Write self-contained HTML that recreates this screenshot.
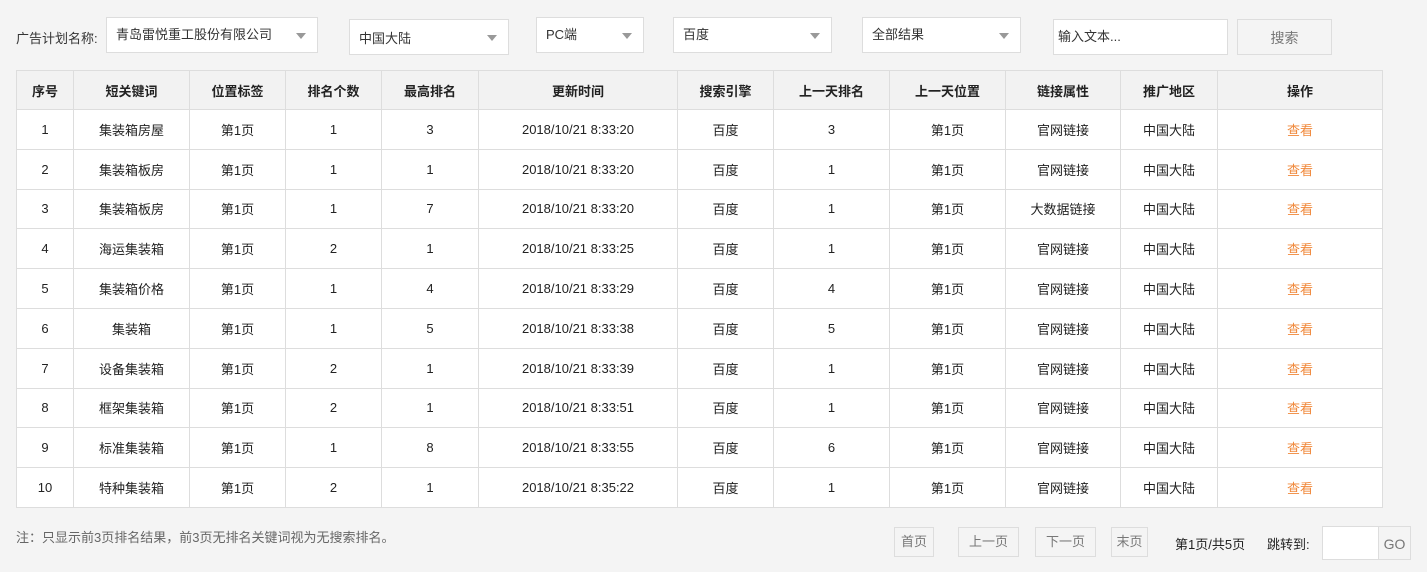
<!DOCTYPE html>
<html><head><meta charset="utf-8"><style>
*{box-sizing:border-box;margin:0;padding:0}
body{width:1427px;height:572px;background:#f4f4f4;font-family:"Liberation Sans","Noto Sans CJK SC",sans-serif;font-size:13px;color:#333;position:relative;overflow:hidden}
.a{position:absolute}
.sel{position:absolute;background:#fff;border:1px solid #ddd;height:36px;line-height:34px;padding-left:9px;color:#333}
.sel:after{content:"";position:absolute;right:11px;top:15px;border-left:5px solid transparent;border-right:5px solid transparent;border-top:6px solid #999}
table{position:absolute;left:16px;top:70px;border-collapse:collapse;background:#fff;table-layout:fixed;width:1366px}
td,th{border:1px solid #ddd;text-align:center;height:39.8px;font-size:13px;color:#222}
th{background:#f2f2f2;height:39px;font-weight:bold}
td.o{color:#f0883a}
.pb{position:absolute;top:527px;height:30px;line-height:28px;border:1px solid #ddd;text-align:center;color:#777;background:#f4f4f4}
</style></head><body>
<div class="a" style="left:16px;top:28px">广告计划名称:</div>
<div class="sel" style="left:106px;top:17px;width:212px">青岛雷悦重工股份有限公司</div>
<div class="sel" style="left:349px;top:19px;width:160px;line-height:38px">中国大陆</div>
<div class="sel" style="left:536px;top:17px;width:108px">PC端</div>
<div class="sel" style="left:673px;top:17px;width:159px">百度</div>
<div class="sel" style="left:862px;top:17px;width:159px">全部结果</div>
<div class="a" style="left:1053px;top:19px;width:175px;height:36px;background:#fff;border:1px solid #ddd;line-height:34px;padding-left:4px">输入文本...</div>
<div class="a" style="left:1237px;top:19px;width:95px;height:36px;border:1px solid #ddd;line-height:36px;text-align:center;color:#777;font-size:14px">搜索</div>
<table>
<colgroup><col style="width:57px"><col style="width:116px"><col style="width:96px"><col style="width:96px"><col style="width:97px"><col style="width:199px"><col style="width:96px"><col style="width:116px"><col style="width:116px"><col style="width:115px"><col style="width:97px"><col style="width:165px"></colgroup>
<tr><th>序号</th><th>短关键词</th><th>位置标签</th><th>排名个数</th><th>最高排名</th><th>更新时间</th><th>搜索引擎</th><th>上一天排名</th><th>上一天位置</th><th>链接属性</th><th>推广地区</th><th>操作</th></tr>
<tr><td>1</td><td>集装箱房屋</td><td>第1页</td><td>1</td><td>3</td><td>2018/10/21 8:33:20</td><td>百度</td><td>3</td><td>第1页</td><td>官网链接</td><td>中国大陆</td><td class="o">查看</td></tr>
<tr><td>2</td><td>集装箱板房</td><td>第1页</td><td>1</td><td>1</td><td>2018/10/21 8:33:20</td><td>百度</td><td>1</td><td>第1页</td><td>官网链接</td><td>中国大陆</td><td class="o">查看</td></tr>
<tr><td>3</td><td>集装箱板房</td><td>第1页</td><td>1</td><td>7</td><td>2018/10/21 8:33:20</td><td>百度</td><td>1</td><td>第1页</td><td>大数据链接</td><td>中国大陆</td><td class="o">查看</td></tr>
<tr><td>4</td><td>海运集装箱</td><td>第1页</td><td>2</td><td>1</td><td>2018/10/21 8:33:25</td><td>百度</td><td>1</td><td>第1页</td><td>官网链接</td><td>中国大陆</td><td class="o">查看</td></tr>
<tr><td>5</td><td>集装箱价格</td><td>第1页</td><td>1</td><td>4</td><td>2018/10/21 8:33:29</td><td>百度</td><td>4</td><td>第1页</td><td>官网链接</td><td>中国大陆</td><td class="o">查看</td></tr>
<tr><td>6</td><td>集装箱</td><td>第1页</td><td>1</td><td>5</td><td>2018/10/21 8:33:38</td><td>百度</td><td>5</td><td>第1页</td><td>官网链接</td><td>中国大陆</td><td class="o">查看</td></tr>
<tr><td>7</td><td>设备集装箱</td><td>第1页</td><td>2</td><td>1</td><td>2018/10/21 8:33:39</td><td>百度</td><td>1</td><td>第1页</td><td>官网链接</td><td>中国大陆</td><td class="o">查看</td></tr>
<tr><td>8</td><td>框架集装箱</td><td>第1页</td><td>2</td><td>1</td><td>2018/10/21 8:33:51</td><td>百度</td><td>1</td><td>第1页</td><td>官网链接</td><td>中国大陆</td><td class="o">查看</td></tr>
<tr><td>9</td><td>标准集装箱</td><td>第1页</td><td>1</td><td>8</td><td>2018/10/21 8:33:55</td><td>百度</td><td>6</td><td>第1页</td><td>官网链接</td><td>中国大陆</td><td class="o">查看</td></tr>
<tr><td>10</td><td>特种集装箱</td><td>第1页</td><td>2</td><td>1</td><td>2018/10/21 8:35:22</td><td>百度</td><td>1</td><td>第1页</td><td>官网链接</td><td>中国大陆</td><td class="o">查看</td></tr>
</table>
<div class="a" style="left:16px;top:527px;color:#666">注：只显示前3页排名结果，前3页无排名关键词视为无搜索排名。</div>
<div class="pb" style="left:894px;width:40px">首页</div>
<div class="pb" style="left:958px;width:61px">上一页</div>
<div class="pb" style="left:1035px;width:61px">下一页</div>
<div class="pb" style="left:1111px;width:37px">末页</div>
<div class="a" style="left:1175px;top:534px;color:#222">第1页/共5页</div>
<div class="a" style="left:1267px;top:534px;color:#222">跳转到:</div>
<div class="a" style="left:1322px;top:526px;width:57px;height:34px;background:#fff;border:1px solid #ddd"></div>
<div class="a" style="left:1378px;top:526px;width:33px;height:34px;border:1px solid #ddd;line-height:34px;text-align:center;color:#777;font-size:14px">GO</div>
</body></html>
